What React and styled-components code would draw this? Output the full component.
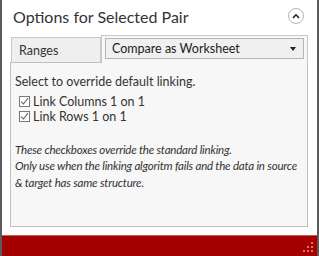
import React, { useState } from "react";
import styled, { createGlobalStyle } from "styled-components";

const GlobalStyle = createGlobalStyle`
  html, body {
    margin: 0;
    padding: 0;
    background: #ffffff;
  }
  * {
    box-sizing: border-box;
  }
`;

const Window = styled.div`
  width: 319px;
  height: 256px;
  display: flex;
  flex-direction: column;
  background: #ffffff;
  border-left: 2px solid #5a5a5a;
  border-right: 2px solid #5a5a5a;
  font-family: Lato, "Open Sans", sans-serif;
  color: #333333;
`;

const Header = styled.div`
  height: 35px;
  display: flex;
  align-items: center;
  justify-content: space-between;
  padding: 0 13px 3px 11px;
`;

const Title = styled.h1`
  margin: 0;
  font-size: 16px;
  font-weight: 400;
  color: #333333;
`;

const CollapseButton = styled.button`
  width: 16px;
  height: 16px;
  padding: 0;
  border-radius: 50%;
  border: 1px solid #b5b5b5;
  background: #ffffff;
  display: flex;
  align-items: center;
  justify-content: center;
  cursor: pointer;
`;

const Body = styled.div`
  flex: 1;
  display: flex;
  flex-direction: column;
  padding: 0 9px 8px 8px;
`;

const TabRow = styled.div`
  display: flex;
  align-items: flex-end;
  margin-left: 1px;
`;

const Tab = styled.div`
  width: 90px;
  height: 26px;
  margin-bottom: -1px;
  display: flex;
  align-items: center;
  padding-left: 7px;
  font-size: 12.5px;
  background: #efefef;
  border: 1px solid #c8c8c8;
  border-bottom: none;
  color: #333333;
`;

const ActiveTab = styled.div`
  flex: 1;
  height: 28px;
  margin-bottom: -1px;
  padding: 2px 3px 4px 3px;
  background: #f7f7f7;
  border: 1px solid #c8c8c8;
  border-bottom: none;
  position: relative;
  z-index: 1;
`;

const Select = styled.div`
  height: 21px;
  display: flex;
  align-items: center;
  justify-content: space-between;
  padding: 0 7px 0 6px;
  font-size: 12.5px;
  background: #f0f0f0;
  border: 1px solid #b4b4b4;
  color: #222222;
`;

const Arrow = styled.span`
  width: 0;
  height: 0;
  border-left: 3.5px solid transparent;
  border-right: 3.5px solid transparent;
  border-top: 4px solid #222222;
`;

const Panel = styled.div`
  flex: 1;
  background: #f7f7f7;
  border: 1px solid #c0c0c0;
  padding: 11px 0 0 4px;
  font-size: 12.5px;
`;

const Hint = styled.div`
  line-height: 15px;
  margin-bottom: 5px;
`;

const CheckRow = styled.label`
  display: flex;
  align-items: center;
  height: 15px;
  padding-left: 4px;
  gap: 3px;
  cursor: pointer;
`;

const Box = styled.span`
  width: 11px;
  height: 11px;
  border: 1px solid #7a7a7a;
  background: #ffffff;
  display: flex;
  align-items: center;
  justify-content: center;
`;

const Note = styled.p`
  margin: 18px 0 0 0;
  font-style: italic;
  font-size: 11.5px;
  line-height: 16.3px;
  letter-spacing: -0.2px;
  white-space: nowrap;
  color: #333333;
`;

const Footer = styled.div`
  height: 21px;
  background: #a50000;
  border-top: 1px solid #c45a5a;
  display: flex;
  justify-content: flex-end;
  align-items: flex-end;
  padding: 0 4px 4px 0;
`;

function Check({ label, checked, onToggle }) {
  return (
    <CheckRow onClick={onToggle}>
      <Box>
        {checked && (
          <svg width="9" height="9" viewBox="0 0 9 9">
            <path d="M1 4.6 L3.4 7 L8 1.2" fill="none" stroke="#666" strokeWidth="1.1" />
          </svg>
        )}
      </Box>
      {label}
    </CheckRow>
  );
}

function Grip() {
  const dots = [[8, 0], [4, 4], [8, 4], [0, 8], [4, 8], [8, 8]];
  return (
    <svg width="10" height="10" viewBox="0 0 10 10">
      {dots.map(([x, y]) => (
        <rect key={`${x}-${y}`} x={x} y={y} width="2" height="2" fill="#e07070" />
      ))}
    </svg>
  );
}

export default function App() {
  const [cols, setCols] = useState(true);
  const [rows, setRows] = useState(true);

  return (
    <>
      <GlobalStyle />
      <Window>
        <Header>
          <Title>Options for Selected Pair</Title>
          <CollapseButton aria-label="Collapse">
            <svg width="8" height="6" viewBox="0 0 8 6">
              <path d="M1 5 L4 1.8 L7 5" fill="none" stroke="#222" strokeWidth="1.6" />
            </svg>
          </CollapseButton>
        </Header>
        <Body>
          <TabRow>
            <Tab>Ranges</Tab>
            <ActiveTab>
              <Select>
                Compare as Worksheet
                <Arrow />
              </Select>
            </ActiveTab>
          </TabRow>
          <Panel>
            <Hint>Select to override default linking.</Hint>
            <Check label="Link Columns 1 on 1" checked={cols} onToggle={() => setCols(!cols)} />
            <Check label="Link Rows 1 on 1" checked={rows} onToggle={() => setRows(!rows)} />
            <Note>
              These checkboxes override the standard linking.
              <br />
              Only use when the linking algoritm fails and the data in source
              <br />& target has same structure.
            </Note>
          </Panel>
        </Body>
        <Footer>
          <Grip />
        </Footer>
      </Window>
    </>
  );
}
